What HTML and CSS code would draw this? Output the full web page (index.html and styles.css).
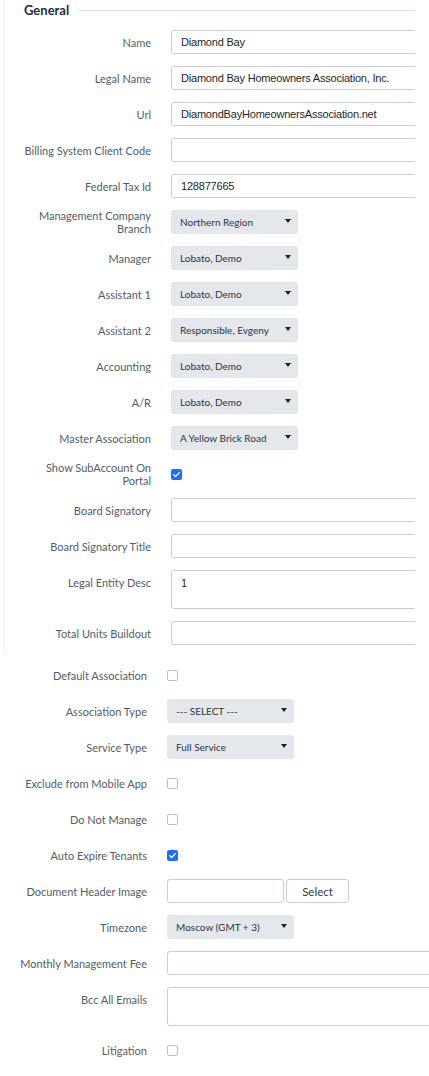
FILE: index.html
```html
<!DOCTYPE html>
<html lang="en">
<head>
<meta charset="utf-8">
<title>General</title>
<link rel="stylesheet" href="styles.css">
</head>
<body>
<div class="page">
  <section class="panel">
    <div class="panel-head">
      <h2 class="panel-title">General</h2>
      <span class="panel-rule"></span>
    </div>
    <div class="form top-form">
      <label class="lbl">Name</label>
      <div class="ctl"><input class="txt" type="text" value="Diamond Bay"></div>

      <label class="lbl">Legal Name</label>
      <div class="ctl"><input class="txt" type="text" value="Diamond Bay Homeowners Association, Inc."></div>

      <label class="lbl">Url</label>
      <div class="ctl"><input class="txt" type="text" value="DiamondBayHomeownersAssociation.net"></div>

      <label class="lbl">Billing System Client Code</label>
      <div class="ctl"><input class="txt" type="text" value=""></div>

      <label class="lbl">Federal Tax Id</label>
      <div class="ctl"><input class="txt" type="text" value="128877665"></div>

      <label class="lbl">Management Company Branch</label>
      <div class="ctl"><div class="sel"><span>Northern Region</span><i class="caret"></i></div></div>

      <label class="lbl">Manager</label>
      <div class="ctl"><div class="sel"><span>Lobato, Demo</span><i class="caret"></i></div></div>

      <label class="lbl">Assistant 1</label>
      <div class="ctl"><div class="sel"><span>Lobato, Demo</span><i class="caret"></i></div></div>

      <label class="lbl">Assistant 2</label>
      <div class="ctl"><div class="sel"><span>Responsible, Evgeny</span><i class="caret"></i></div></div>

      <label class="lbl">Accounting</label>
      <div class="ctl"><div class="sel"><span>Lobato, Demo</span><i class="caret"></i></div></div>

      <label class="lbl">A/R</label>
      <div class="ctl"><div class="sel"><span>Lobato, Demo</span><i class="caret"></i></div></div>

      <label class="lbl">Master Association</label>
      <div class="ctl"><div class="sel"><span>A Yellow Brick Road</span><i class="caret"></i></div></div>

      <label class="lbl">Show SubAccount On Portal</label>
      <div class="ctl"><span class="chk on"><svg viewBox="0 0 11 11" width="11" height="11"><path d="M2.6 5.6 L4.6 7.5 L8.4 3.6" fill="none" stroke="#fff" stroke-width="1.3" stroke-linecap="round" stroke-linejoin="round"/></svg></span></div>

      <label class="lbl">Board Signatory</label>
      <div class="ctl"><input class="txt" type="text" value=""></div>

      <label class="lbl">Board Signatory Title</label>
      <div class="ctl"><input class="txt" type="text" value=""></div>

      <label class="lbl lbl-top">Legal Entity Desc</label>
      <div class="ctl"><textarea class="area">1</textarea></div>

      <label class="lbl">Total Units Buildout</label>
      <div class="ctl"><input class="txt" type="text" value=""></div>
    </div>
  </section>

  <section class="form bottom-form">
    <label class="lbl">Default Association</label>
    <div class="ctl"><span class="chk"></span></div>

    <label class="lbl">Association Type</label>
    <div class="ctl"><div class="sel"><span>--- SELECT ---</span><i class="caret"></i></div></div>

    <label class="lbl">Service Type</label>
    <div class="ctl"><div class="sel"><span>Full Service</span><i class="caret"></i></div></div>

    <label class="lbl">Exclude from Mobile App</label>
    <div class="ctl"><span class="chk"></span></div>

    <label class="lbl">Do Not Manage</label>
    <div class="ctl"><span class="chk"></span></div>

    <label class="lbl">Auto Expire Tenants</label>
    <div class="ctl"><span class="chk on"><svg viewBox="0 0 11 11" width="11" height="11"><path d="M2.6 5.6 L4.6 7.5 L8.4 3.6" fill="none" stroke="#fff" stroke-width="1.3" stroke-linecap="round" stroke-linejoin="round"/></svg></span></div>

    <label class="lbl">Document Header Image</label>
    <div class="ctl file-ctl"><input class="txt file-txt" type="text" value=""><button class="btn" type="button">Select</button></div>

    <label class="lbl">Timezone</label>
    <div class="ctl"><div class="sel"><span>Moscow (GMT + 3)</span><i class="caret"></i></div></div>

    <label class="lbl">Monthly Management Fee</label>
    <div class="ctl"><input class="txt" type="text" value=""></div>

    <label class="lbl lbl-top">Bcc All Emails</label>
    <div class="ctl"><textarea class="area"></textarea></div>

    <label class="lbl">Litigation</label>
    <div class="ctl"><span class="chk"></span></div>
  </section>
</div>
</body>
</html>
```

FILE: styles.css
```css
html, body {
  margin: 0;
  padding: 0;
  background: #ffffff;
  overflow: hidden;
}

body {
  font-family: "Lato", "Open Sans", sans-serif;
  color: #5b6370;
  width: 429px;
}

.page {
  display: flex;
  flex-direction: column;
}

.panel {
  margin-left: 4px;
  width: 410px;
  border-left: 1px solid #eef0f2;
  overflow: hidden;
  padding-bottom: 10px;
}

.panel-head {
  display: flex;
  align-items: center;
  height: 20px;
  padding-left: 19px;
  margin-bottom: 10px;
  gap: 9px;
}

.panel-title {
  margin: 0;
  font-size: 13px;
  font-weight: 700;
  color: #1e2b3a;
  line-height: 20px;
}

.panel-rule {
  flex: 1;
  height: 1px;
  background: #cfe2f6;
}

.form {
  display: grid;
  grid-template-columns: 146px 1fr;
  grid-auto-rows: minmax(24px, auto);
  column-gap: 20px;
  row-gap: 12px;
  align-items: center;
}

.bottom-form {
  grid-template-columns: 147px 1fr;
  padding-top: 8px;
}

.lbl {
  box-sizing: border-box;
  padding-left: 18px;
  text-align: right;
  font-size: 11px;
  line-height: 13px;
  margin: -1px 0;
  color: #545c69;
}

.bottom-form .lbl {
  padding-left: 19px;
}

.lbl-top {
  align-self: start;
  padding-top: 6px;
  margin: 0;
}

.ctl {
  display: flex;
  align-items: center;
  height: 100%;
  min-width: 0;
}

.txt {
  box-sizing: border-box;
  width: 270px;
  flex: none;
  height: 24px;
  margin: 0;
  padding: 0 9px;
  border: 1px solid #cacdd1;
  border-radius: 3px;
  background: #fff;
  font-family: "Liberation Sans", Arial, sans-serif;
  font-size: 11px;
  letter-spacing: -0.2px;
  color: #1f1f1f;
  outline: none;
}

.area {
  box-sizing: border-box;
  display: block;
  width: 270px;
  flex: none;
  height: 39px;
  margin: 0;
  padding: 5px 9px;
  border: 1px solid #cacdd1;
  border-radius: 3px;
  background: #fff;
  font-family: "Liberation Sans", Arial, sans-serif;
  font-size: 11px;
  line-height: 14px;
  color: #1f1f1f;
  resize: none;
  outline: none;
}

.sel {
  box-sizing: border-box;
  width: 127px;
  height: 24px;
  display: flex;
  align-items: center;
  justify-content: space-between;
  padding: 0 7px 0 9px;
  background: #e4e7eb;
  border-radius: 3px;
  font-size: 10px;
  color: #2f3640;
}

.caret {
  width: 0;
  height: 0;
  border-left: 3px solid transparent;
  border-right: 3px solid transparent;
  border-top: 4px solid #222;
  margin-bottom: 3px;
}

.chk {
  box-sizing: border-box;
  display: inline-flex;
  width: 11px;
  height: 11px;
  border: 1px solid #b9bec5;
  border-radius: 2px;
  background: #fff;
}

.chk.on {
  border: none;
  background: #1f6ff0;
}

.chk svg {
  display: block;
}

.file-ctl {
  gap: 2px;
}

.file-txt {
  width: 117px;
}

.btn {
  box-sizing: border-box;
  width: 63px;
  height: 24px;
  margin: 0;
  padding: 0;
  border: 1px solid #cacdd1;
  border-radius: 3px;
  background: #fff;
  font-family: "Lato", "Open Sans", sans-serif;
  font-size: 11.5px;
  color: #333a44;
}
```
